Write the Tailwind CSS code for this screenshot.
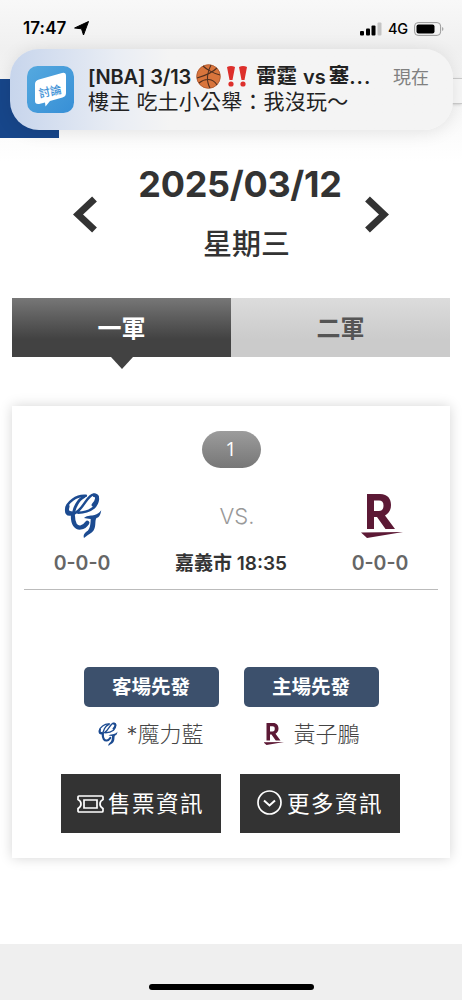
<!DOCTYPE html>
<html lang="zh-Hant">
<head>
<meta charset="utf-8">
<meta name="viewport" content="width=device-width, initial-scale=1">
<title>賽程</title>
<script src="https://cdn.jsdelivr.net/npm/@tailwindcss/browser@4"></script>
</head>
<body class="relative h-[1000px] w-[462px] overflow-hidden bg-white font-['Inter','Noto_Sans_CJK_TC',sans-serif] text-[#333]">
<svg class="absolute size-0" aria-hidden="true">
  <symbol id="g" viewBox="0 0 38 50">
    <g fill="none" stroke="#1c4b91" stroke-linecap="round" stroke-linejoin="round">
      <path stroke-width="2.600" d="M22 4C12 3 2 11 1.500 18c-.5 7 6 7 12 2C21 14 24 3 30 2.500c7 0 5 9 0 14-5 4-10 5-16 5"/>
      <path stroke-width="4" d="M3 15c-1.500 5 0 7 4 7M31 3.500c4 0 3 6-1 10"/>
      <path stroke-width="3" d="M20 5C14 8 9 17 8.500 26"/>
      <path stroke-width="4.400" d="M8.500 25c0 8 3 12.500 8 12 3-.5 5-2 7-5"/>
    </g>
    <path fill="#1c4b91" d="M20 27c4-3 8-2 11-3 3-1 5-2 7-5-1 6-3 8-5 8-2 3 0 8-3 13-3 4-6 4-10 8-1-4 1-5 3-7 3-2 4-7 4-13-3-.5-5-.5-7-1z"/>
  </symbol>
  <symbol id="r" viewBox="0 0 42 46">
    <path fill="#5c1935" fill-rule="evenodd" d="M6 1h13c8 0 11 5 11 11 0 5-2 8-6 10.500L34 36h-9.500L16 24h-3v12H6zM13 7.500V18h5c3 0 4.500-2 4.500-5.500s-1.500-5-4.500-5z"/>
    <path fill="#5c1935" d="M0 39.500 42 39 6 45z"/>
  </symbol>
</svg>

<header class="relative h-[138px] bg-linear-to-b from-[#f8f8f8] from-0% via-[#f0f0f0] via-35% to-[#fcfcfc]">
  <div class="absolute top-[79px] left-0 h-[59px] w-[59px] bg-[#17468a]"></div>
  <div class="absolute top-[78px] right-0 h-[26px] w-8 border-y border-[#ccc] bg-[#f8f8f8] shadow-sm"></div>
  <div class="flex h-[50px] items-center justify-between pt-[7px] pr-[18px] pl-[23px] text-black">
    <div class="flex items-center gap-[8px]">
      <span class="text-[17px] font-semibold tracking-[0.1px]">17:47</span>
      <svg class="size-[15px]" viewBox="0 0 15 15"><path d="M14.500.5 9.500 14 7.500 7.800.6 7z" fill="#000" stroke="#000" stroke-width="1" stroke-linejoin="round"/></svg>
    </div>
    <div class="flex items-center gap-[6px]">
      <svg class="h-[14px] w-[22px]" viewBox="0 0 22 14"><rect y="9" width="4" height="4.500" rx="1"/><rect x="6" y="6.500" width="4" height="7" rx="1"/><rect x="11.500" y="3.500" width="4" height="10" rx="1"/><rect x="17.500" y=".5" width="4" height="13" rx="1" fill="#c4c4c4"/></svg>
      <span class="w-5 text-[14.500px] font-medium tracking-[-0.3px]">4G</span>
      <svg class="h-[14px] w-[30px]" viewBox="0 0 30 14"><rect x=".6" y=".6" width="26" height="12.800" rx="3.500" fill="none" stroke="#999"/><rect x="2.500" y="2.500" width="18" height="9" rx="2"/><path d="M28.200 5c1.600.5 1.600 3.500 0 4z" fill="#999"/></svg>
    </div>
  </div>
  <div class="absolute top-[49px] left-[10px] flex h-[81px] w-[443px] rounded-[29px] bg-linear-to-r from-[#c7d5ec] via-[#e9edf4] via-24% to-[#f4f4f4] to-36% shadow-[0_2px_18px_rgba(0,0,0,0.1)]">
    <svg class="mt-[17px] ml-[17px] size-[47px] shrink-0 font-['Noto_Sans_CJK_TC',sans-serif]" viewBox="0 0 47 47">
      <defs><linearGradient id="app" x2="1" y2="1"><stop stop-color="#55a9df"/><stop offset="1" stop-color="#378fd6"/></linearGradient></defs>
      <rect width="47" height="47" rx="10.500" fill="url(#app)"/>
      <path d="M12 13.500 35 7q4-1 4 3v17q0 3.500-3.500 4.500L23 35l-4.500 5.500-.5-4-6 1.500q-4 .5-4-3V18q0-3.500 4-4.500z" fill="#fff"/>
      <text x="12.500" y="32" font-size="11.500" font-weight="500" fill="#3c91d6" transform="rotate(-12 12 31)">討論</text>
    </svg>
    <div class="ml-[14px] flex w-[288px] flex-col pt-[15px] whitespace-nowrap text-[#222]">
      <div class="flex h-[25px] items-center text-[20px] font-semibold">
        <span class="w-[108px] tracking-[-0.15px]">[NBA] 3/13</span>
        <svg class="size-[25px] shrink-0" viewBox="0 0 25 25"><circle cx="12.500" cy="12.500" r="12" fill="#d9753c"/><g fill="none" stroke="#51301f" stroke-width="1.100"><circle cx="12.500" cy="12.500" r="11.800" stroke="#a35530" stroke-width=".7"/><path d="M1 14C8 12 17 8 21 4M15 1C11 8 10 17 14 24M7 2c4 4 12 8 17 9M3 19c6-5 14-5 18 2"/></g></svg>
        <svg class="ml-[5px] h-[21px] w-[22px] shrink-0" viewBox="0 0 22 21" fill="#dd2f2b"><path d="M1 1q4-2 8 0L6.500 14h-3zM13 1q4-2 8 0l-2.500 13h-3z"/><circle cx="5" cy="18" r="2.600"/><circle cx="17" cy="18" r="2.600"/></svg>
        <span class="ml-[8px] text-[20.500px] font-bold">雷霆</span><span class="ml-[6px] text-[20px]">vs</span><span class="ml-[3px] text-[20.500px] font-bold">塞</span><span class="tracking-[1px]">...</span>
      </div>
      <div class="flex h-[25px] items-center text-[21px] tracking-[0.2px]">樓主<span class="ml-[6px]">吃土小公舉：我沒玩～</span></div>
    </div>
    <span class="mt-[15px] ml-[17px] text-[18px] whitespace-nowrap text-[#808080]">現在</span>
  </div>
</header>

<main>
  <section class="flex h-[160px] items-start justify-between bg-linear-to-b from-[#fcfcfc] to-white to-15% px-[73px] pt-[26px]">
    <svg class="mt-[32px] h-[37px] w-[24px]" viewBox="0 0 24 37"><path d="M21.500 3 5 18.500l16.500 15.500" fill="none" stroke="#333" stroke-width="7"/></svg>
    <div class="flex flex-col items-center whitespace-nowrap pl-[18px]">
      <h1 class="flex h-[40px] w-[205px] items-center justify-center text-[36px] font-bold tracking-[-0.3px]">2025/03/12</h1>
      <p class="mt-[21px] ml-[13px] flex h-[40px] items-center text-[29px] font-medium">星期三</p>
    </div>
    <svg class="mt-[32px] h-[37px] w-[24px]" viewBox="0 0 24 37"><path d="M2.500 3 19 18.500 2.500 34" fill="none" stroke="#333" stroke-width="7"/></svg>
  </section>

  <nav class="mx-3 grid h-[59px] grid-cols-2 text-[24px] font-bold">
    <div class="relative flex items-center justify-center bg-linear-to-b from-[#777] to-[#424242] to-70% pt-[2px] text-white">一軍
      <svg class="absolute top-full left-1/2 h-3 w-[22px] -translate-x-1/2" viewBox="0 0 22 12"><path d="M0 0h22L11 12z" fill="#424242"/></svg>
    </div>
    <div class="flex items-center justify-center bg-linear-to-b from-[#dcdcdc] to-[#cbcbcb] to-70% pt-[2px] text-[#555]">二軍</div>
  </nav>

  <article class="mx-3 mt-[49px] h-[452px] bg-white px-3 pt-[25px] shadow-[0_0_12px_rgba(0,0,0,0.17)]">
    <div class="mx-auto flex h-[37px] w-[59px] items-center justify-center rounded-full bg-linear-to-b from-[#9c9c9c] to-[#777] pb-[2px] font-['Open_Sans',sans-serif] text-[20px] text-white">1</div>
    <div class="grid h-[122px] grid-cols-[116px_1fr_116px] border-b border-[#bbb] pt-[24px] whitespace-nowrap">
      <div class="flex flex-col items-center"><svg class="ml-[1px] h-[48px] w-[38px]"><use href="#g"/></svg><span class="mt-[9px] text-[19.500px] leading-7 font-semibold text-[#666]">0-0-0</span></div>
      <div class="flex flex-col items-center"><span class="mt-[6px] ml-[12px] flex h-[36px] items-center text-[22px] font-light text-[#999]">VS.</span><span class="mt-[16px] text-[19px] leading-7 font-semibold">嘉義市 18:35</span></div>
      <div class="flex flex-col items-center"><svg class="mt-px ml-[3px] h-[46px] w-[42px]"><use href="#r"/></svg><span class="mt-[10px] text-[19.500px] leading-7 font-semibold text-[#666]">0-0-0</span></div>
    </div>
    <div class="mt-[77px] flex justify-center gap-[25px] text-[19.500px] font-bold text-white">
      <div class="flex h-[40px] w-[135px] items-center justify-center rounded-[5px] bg-[#3c506c] pt-px">客場先發</div>
      <div class="flex h-[40px] w-[135px] items-center justify-center rounded-[5px] bg-[#3c506c] pt-px">主場先發</div>
    </div>
    <div class="mt-[11px] flex h-8 justify-center gap-[25px] text-[22px] font-light text-[#444]">
      <div class="flex w-[135px] items-center justify-center gap-[8px] whitespace-nowrap"><svg class="h-[25px] w-[20px]"><use href="#g"/></svg><span>*魔力藍</span></div>
      <div class="flex w-[135px] items-center gap-[10px] pl-[20px] whitespace-nowrap"><svg class="h-[24px] w-[20px]" viewBox="0 0 20 24" preserveAspectRatio="none"><use href="#r" x="-0.500" width="21" height="24"/></svg><span>黃子鵬</span></div>
    </div>
    <div class="mr-[1px] mt-[24px] flex justify-center gap-[19px] text-[22.500px] tracking-[1.500px] whitespace-nowrap text-white">
      <div class="flex h-[59px] w-[160px] items-center gap-[4px] bg-[#333] pl-[16px]">
        <svg class="h-[18px] w-[27px]" viewBox="0 0 27 18" fill="none" stroke="#fff" stroke-width="1.700"><path d="M2 1h23q1 0 1 1v2.500c-4 2-4 7 0 9V16q0 1-1 1H2q-1 0-1-1v-2.500c4-2 4-7 0-9V2q0-1 1-1z"/><path d="M7 5h13v8H7z"/></svg><span>售票資訊</span>
      </div>
      <div class="flex h-[59px] w-[160px] items-center gap-[5px] bg-[#333] pl-[17px]">
        <svg class="-mt-[2px] size-[25px]" viewBox="0 0 25 25" fill="none" stroke="#fff" stroke-width="1.700"><circle cx="12.500" cy="12.500" r="11.500"/><path d="m7 10.500 5.500 5 5.500-5" stroke-width="2"/></svg><span>更多資訊</span>
      </div>
    </div>
  </article>
</main>

<footer class="mt-[86px] flex h-[56px] items-end justify-center bg-[#efefef] pb-[10px]"><div class="h-[6px] w-[165px] rounded-full bg-black"></div></footer>
</body>
</html>
